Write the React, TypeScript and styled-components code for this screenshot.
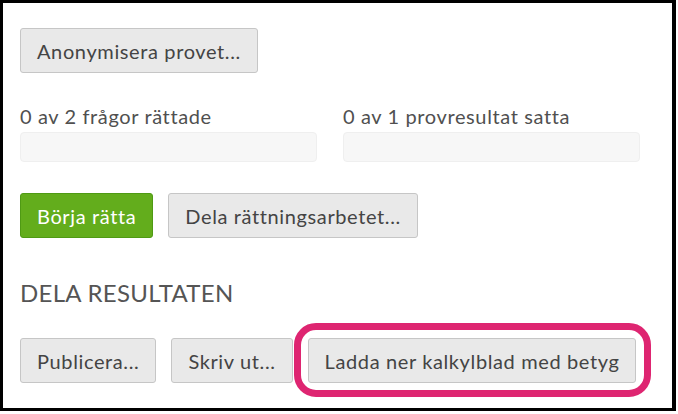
import React from "react";
import styled, { createGlobalStyle } from "styled-components";

const Global = createGlobalStyle`
  html, body { margin: 0; padding: 0; background: #ffffff; }
  body { font-family: Lato, "Noto Sans", sans-serif; }
`;

const Frame = styled.div`
  box-sizing: border-box;
  width: 676px;
  height: 411px;
  border-style: solid;
  border-color: #000;
  border-width: 3px 4px 3px 3px;
  background: #fff;
  padding: 25px 0 0 17px;
  display: flex;
  flex-direction: column;
  overflow: hidden;
`;

const Button = styled.button<{ $primary?: boolean }>`
  box-sizing: border-box;
  height: 45px;
  padding: 0 16px;
  font-family: Lato, "Noto Sans", sans-serif;
  font-size: 20px;
  letter-spacing: 0.62px;
  border-radius: 3px;
  border: 1px solid ${(p) => (p.$primary ? "#4f9a14" : "#c6c6c6")};
  background: ${(p) => (p.$primary ? "#63ad1c" : "#e9e9e9")};
  color: ${(p) => (p.$primary ? "#ffffff" : "#444444")};
  cursor: pointer;
  white-space: nowrap;
`;

const Row = styled.div<{ $gap: number; $top: number }>`
  display: flex;
  align-items: center;
  gap: ${(p) => p.$gap}px;
  margin-top: ${(p) => p.$top}px;
`;

const StatsRow = styled.div`
  display: grid;
  grid-template-columns: 297px 297px;
  column-gap: 26px;
  margin-top: 31px;
`;

const Stat = styled.div`
  display: flex;
  flex-direction: column;
  gap: 4px;
`;

const StatLabel = styled.div`
  font-size: 20px;
  line-height: 24px;
  letter-spacing: 0.62px;
  color: #505050;
`;

const Track = styled.div`
  box-sizing: border-box;
  height: 30px;
  border: 1px solid #efefef;
  border-radius: 4px;
  background: #f7f7f7;
`;

const Heading = styled.h2`
  margin: 40px 0 0 0;
  font-size: 24px;
  line-height: 29px;
  letter-spacing: 0.3px;
  font-weight: 400;
  color: #555;
  text-transform: uppercase;
`;

const Highlight = styled.div`
  position: relative;
  &::after {
    content: "";
    position: absolute;
    left: -14px;
    right: -15px;
    top: -15px;
    bottom: -14px;
    border: 7px solid #de2571;
    border-radius: 22px;
    pointer-events: none;
  }
`;

export default function App() {
  return (
    <>
      <Global />
      <Frame>
        <Row $gap={15} $top={0}>
          <Button>Anonymisera provet...</Button>
        </Row>
        <StatsRow>
          <Stat>
            <StatLabel>0 av 2 frågor rättade</StatLabel>
            <Track />
          </Stat>
          <Stat>
            <StatLabel>0 av 1 provresultat satta</StatLabel>
            <Track />
          </Stat>
        </StatsRow>
        <Row $gap={15} $top={31}>
          <Button $primary>Börja rätta</Button>
          <Button>Dela rättningsarbetet...</Button>
        </Row>
        <Heading>Dela resultaten</Heading>
        <Row $gap={15} $top={31}>
          <Button>Publicera...</Button>
          <Button>Skriv ut...</Button>
          <Highlight>
            <Button>Ladda ner kalkylblad med betyg</Button>
          </Highlight>
        </Row>
      </Frame>
    </>
  );
}
